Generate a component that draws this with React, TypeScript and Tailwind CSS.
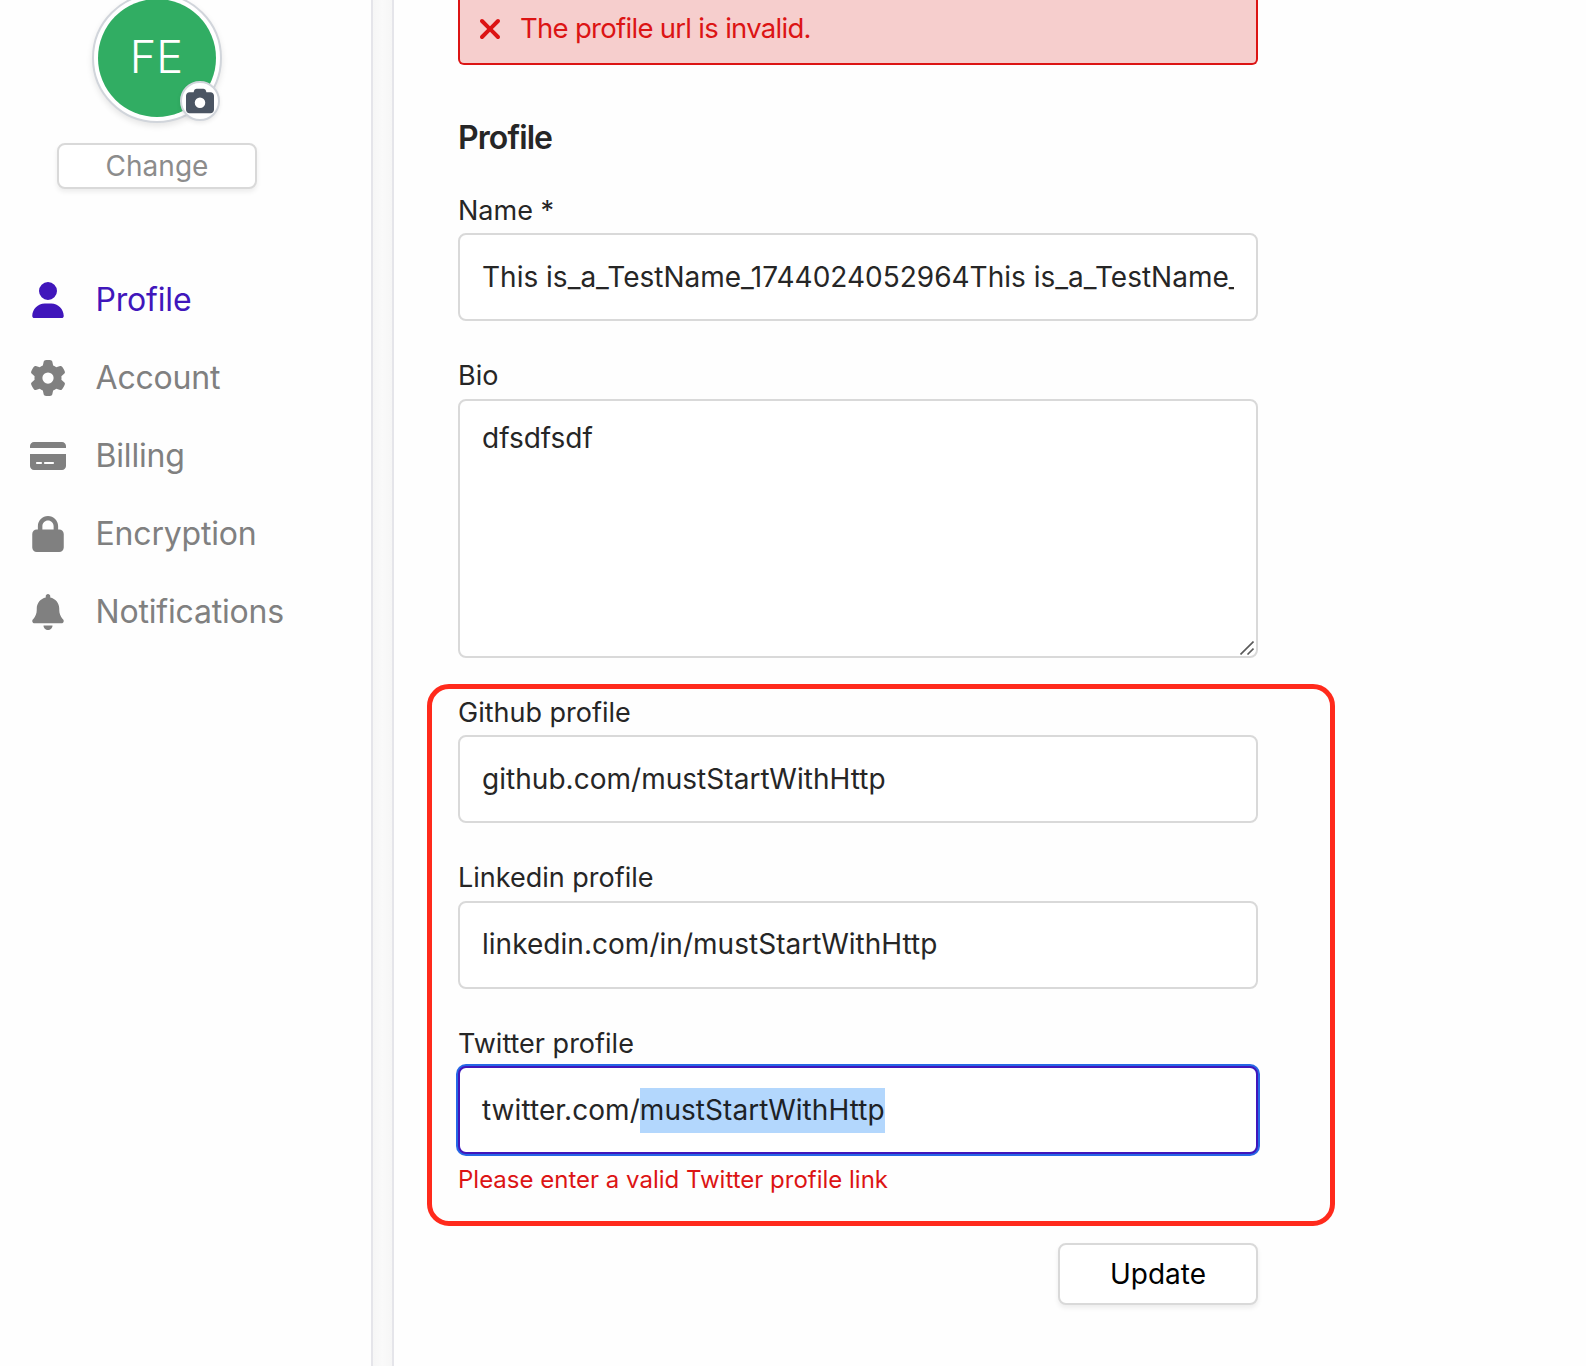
import type { ReactNode } from "react";
import type { IconType } from "react-icons";
import {
  FaBell,
  FaCamera,
  FaCreditCard,
  FaGear,
  FaLock,
  FaUser,
  FaXmark,
} from "react-icons/fa6";

const navItems: { label: string; icon: IconType; active?: boolean }[] = [
  { label: "Profile", icon: FaUser, active: true },
  { label: "Account", icon: FaGear },
  { label: "Billing", icon: FaCreditCard },
  { label: "Encryption", icon: FaLock },
  { label: "Notifications", icon: FaBell },
];

function Avatar() {
  return (
    <div className="relative -mt-[7px] h-[130px] w-[130px] shrink-0 rounded-full border-2 border-[#d1d5db] bg-white p-1 shadow-[0_3px_6px_rgba(0,0,0,0.1)]">
      <div className="flex h-full w-full items-center justify-center rounded-full bg-[#31ad63] pr-px pb-1 text-[45px] leading-none font-light text-white">
        FE
      </div>
      <div className="absolute right-0 bottom-0 flex h-10 w-10 items-center justify-center rounded-full border-2 border-[#d1d5db] bg-white text-[#4b5563] shadow-[0_2px_4px_rgba(0,0,0,0.08)]">
        <FaCamera className="h-7 w-7" />
      </div>
    </div>
  );
}

function Sidebar() {
  return (
    <aside className="w-[373px] shrink-0 border-r-2 border-[#e5e5ea]">
      <div className="flex w-[314px] flex-col items-center">
        <Avatar />
        <button className="mt-5 h-[46px] w-[200px] rounded-lg border-2 border-[#d9d9d9] bg-white text-[28px] leading-[42px] text-[#8c8c8c] shadow-[0_3px_5px_rgba(0,0,0,0.07)]">
          Change
        </button>
      </div>
      <nav className="mt-[72px] flex flex-col">
        {navItems.map(({ label, icon: Icon, active }) => (
          <a
            key={label}
            className={
              active
                ? "flex h-[78px] items-center pl-[30px] text-[#4016bb]"
                : "flex h-[78px] items-center pl-[30px] text-[#808080]"
            }
          >
            <span className="flex w-9 justify-center">
              <Icon className="h-9 w-auto" />
            </span>
            <span className="ml-[29.5px] text-[32px] leading-10 tracking-[-0.18px]">{label}</span>
          </a>
        ))}
      </nav>
    </aside>
  );
}

function Label({ children }: { children: ReactNode }) {
  return <div className="text-[27px] leading-[43px]">{children}</div>;
}

function Input({ children }: { children: ReactNode }) {
  return (
    <div className="h-[88px] rounded-lg border-2 border-[#d9d9d9] bg-white px-[22px]">
      <div className="overflow-hidden text-[28px] leading-[84px] whitespace-nowrap">{children}</div>
    </div>
  );
}

function ProfileForm() {
  return (
    <div className="w-[800px]">
      <div className="flex h-[65px] items-center rounded-b-md border-2 border-t-0 border-[#dc1414] bg-[#f6cecd] pl-3.5 text-[#dc1414]">
        <FaXmark className="mt-[-5px] h-8 w-auto" />
        <span className="mt-[-7px] ml-3.5 text-[27.5px] leading-10 tracking-[-0.71px]">The profile url is invalid.</span>
      </div>

      <h2 className="mt-[53px] mb-[31px] text-[32px] leading-10 font-semibold tracking-[-0.9px]">Profile</h2>

      <div className="flex flex-col gap-px">
        <Label>Name *</Label>
        <Input>This is_a_TestName_1744024052964This is_a_TestName_</Input>
      </div>

      <div className="mt-[33px] flex flex-col gap-0.5">
        <Label>Bio</Label>
        <div className="relative h-[259px] rounded-lg border-2 border-[#d9d9d9] bg-white px-[22px] pt-4 text-[28px] leading-[42px]">
          dfsdfsdf
          <svg
            className="absolute right-0.5 bottom-[1px] h-3.5 w-3.5"
            viewBox="0 0 14 14"
            fill="none"
            stroke="#5a5a5a"
            strokeWidth="1.6"
          >
            <path d="M0.5 13.5 13.5 0.5M7.5 13.5 13.5 7.5" />
          </svg>
        </div>
      </div>

      <div className="relative mt-[33px]">
        <div className="flex flex-col gap-px">
          <Label>Github profile</Label>
          <Input>
            <span className="tracking-[0.03px]">github.com/mustStartWithHttp</span>
          </Input>
        </div>
        <div className="mt-[33px] flex flex-col gap-0.5">
          <Label>Linkedin profile</Label>
          <Input>
            <span className="block h-[84px] leading-[82px] tracking-[0.03px]">linkedin.com/in/mustStartWithHttp</span>
          </Input>
        </div>
        <div className="mt-[33px] flex flex-col gap-px">
          <Label>Twitter profile</Label>
          <div className="h-[88px] rounded-lg border-2 border-[#4016bb] bg-white px-[22px] text-[28px] leading-[84px] tracking-[0.05px] whitespace-nowrap ring-2 ring-[#2667e6]">
            twitter.com/
            <span className="inline-block bg-[#b3d7fd] leading-[45px] text-[#1d2226]">mustStartWithHttp</span>
          </div>
        </div>
        <p className="mt-1.5 text-[24px] leading-10 text-[#dc1414]">Please enter a valid Twitter profile link</p>
        <div className="pointer-events-none absolute -top-[7px] -right-[77px] -bottom-[26px] -left-[31px] rounded-[22px] border-[5px] border-[#ff2a1c]" />
      </div>

      <div className="mt-[43px] flex justify-end">
        <button className="h-[62px] w-[200px] rounded-lg border-2 border-[#d9d9d9] bg-white text-[28px] leading-[58px] text-black shadow-[0_3px_5px_rgba(0,0,0,0.07)]">
          Update
        </button>
      </div>
    </div>
  );
}

export default function App() {
  return (
    <div className="flex h-[1366px] w-[1586px] overflow-hidden bg-[#fefefe] font-['Inter',sans-serif] text-[#262626]">
      <Sidebar />
      <div className="w-[19px] shrink-0 bg-linear-to-r from-[#f6f6f6] via-[#fafafa] to-[#f6f6f6]" />
      <main className="grow border-l-2 border-[#e5e5ea] pl-16">
        <ProfileForm />
      </main>
    </div>
  );
}
